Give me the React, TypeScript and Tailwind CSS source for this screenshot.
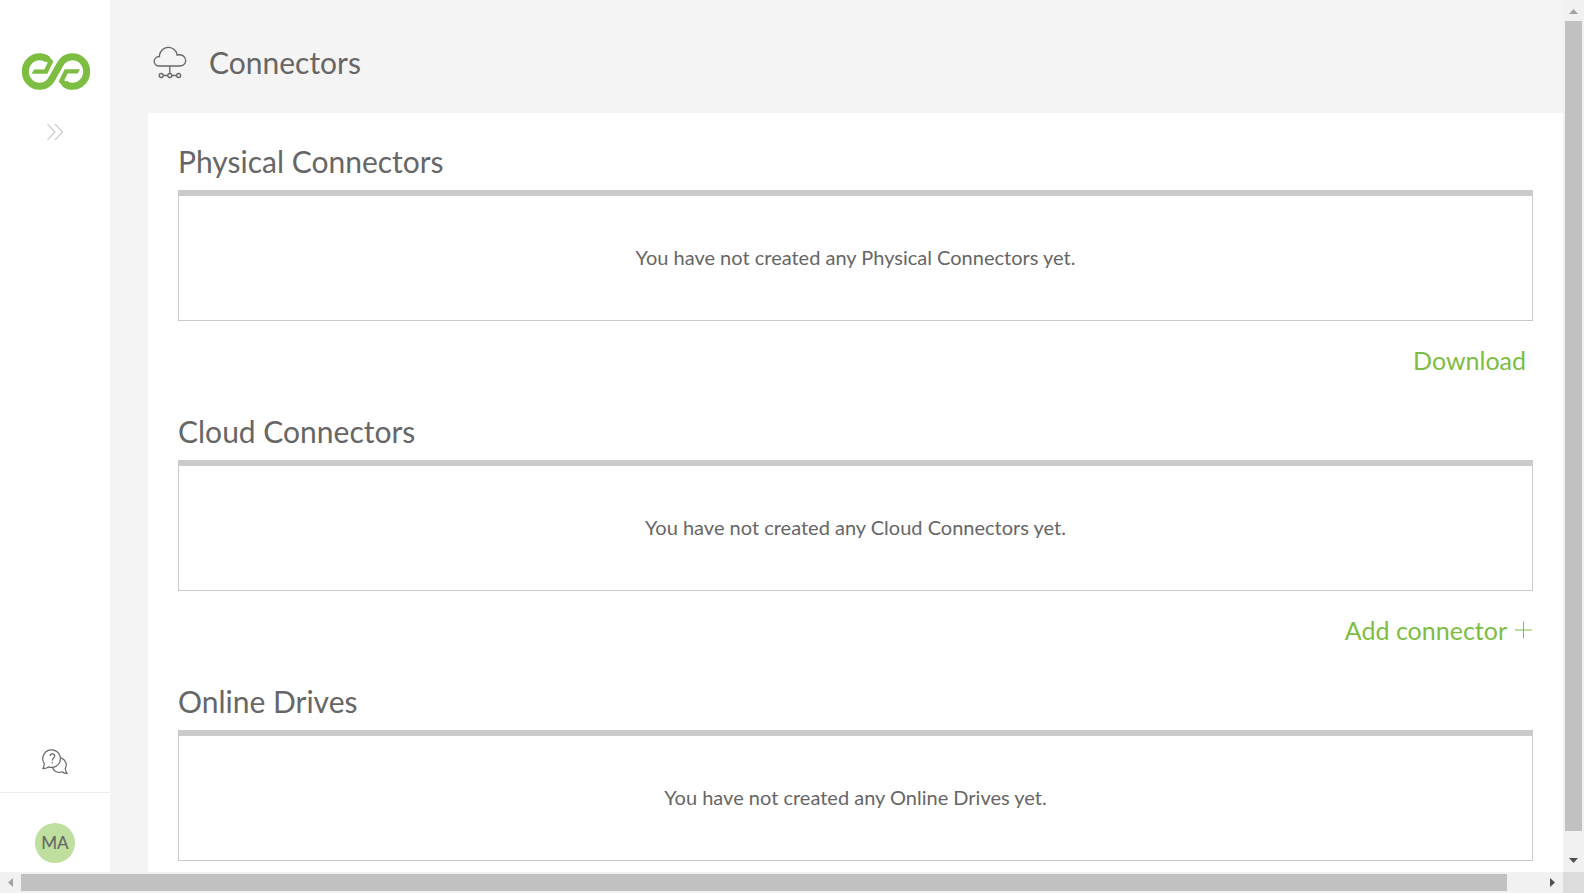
import React from 'react';

function Logo() {
  return (
    <svg viewBox="66 69 204 110" className="h-[37px] w-[68px]" aria-hidden="true">
      <g fill="none" stroke="#7cbd42" strokeWidth="21">
        <path d="M143 88C136 82 128 79.500 119 79.500A43 44.500 0 0 0 119 168.500C149 168.500 156 144 168 124C180 104 187 79.500 217 79.500A43 44.500 0 0 1 217 168.500C208 168.500 200 166 193 160" />
      </g>
      <path fill="#7cbd42" d="M148 80L160 94L142 131H95L102 118H133L143 98L136 92ZM188 168L176 154L194 117H240L233 130H203L193 150L200 156Z" />
    </svg>
  );
}

function CloudIcon() {
  return (
    <svg viewBox="0 0 34 34" className="h-[34px] w-[34px]" fill="none" stroke="#666" strokeWidth="1.3" aria-hidden="true">
      <path d="M6.500 11.500V10A9 9 0 0 1 24 8.800V10C29 9 32.700 11.500 32.700 15.500C32.700 18.800 30 21 27 21H6.500C3.200 21 1.200 19 1.200 16.200C1.200 13.600 3.300 11.500 6.500 11.500ZM16.800 21V28.500M10.400 30.500H14.700M19 30.500H23.300" />
      <circle cx="8.200" cy="30.500" r="2" />
      <circle cx="16.800" cy="30.500" r="2" />
      <circle cx="25.600" cy="30.500" r="2" />
    </svg>
  );
}

function HelpIcon() {
  return (
    <svg viewBox="0 0 26 26" className="h-[26px] w-[26px]" fill="none" stroke="#666" strokeWidth="1.2" strokeLinejoin="round" aria-hidden="true">
      <path d="M.8 19.600C2 18.500 2.300 16.800 2.200 14.400A8.800 8.800 0 1 1 6.600 17.900C4.600 19.200 2.600 19.600.8 19.600Z" />
      <path d="M19.100 8.900C23.800 10.700 25.500 15.700 23.200 19.500C23.500 21.800 24.200 23.400 25.200 24.400C23.100 24.500 21.300 23.800 20 22.700C16 24.500 12 22.500 10.500 18.700" />
      <path d="M8.100 6.900C8.200 5.500 9 4.800 10.400 4.800C11.800 4.800 12.700 5.600 12.700 6.900C12.700 8.600 10.400 8.700 10.400 11.500M10.400 13.200V14.600" />
    </svg>
  );
}

function Sidebar() {
  return (
    <aside className="flex w-[110px] shrink-0 flex-col items-center bg-white pt-[53px] pb-[9px]">
      <a href="#home" aria-label="Home" className="ml-[2px]"><Logo /></a>
      <button type="button" aria-label="Expand menu" className="mt-[34px]">
        <svg viewBox="0 0 16 16" className="h-4 w-4" fill="none" stroke="#c8c8c8" strokeWidth="1.1" aria-hidden="true">
          <path d="M.5 0L8 8L.5 16M8 0L15.500 8L8 16" />
        </svg>
      </button>
      <button type="button" aria-label="Help" className="mt-auto mb-[17px]"><HelpIcon /></button>
      <div className="mb-[30px] h-px w-full bg-[#ececec]" />
      <button type="button" aria-label="Account MA" className="h-10 w-10 rounded-full bg-[#bfdf9f] text-[17px] font-medium text-[#666]">MA</button>
    </aside>
  );
}

type SectionProps = { title: string; children?: React.ReactNode };

function Section({ title, children }: SectionProps) {
  return (
    <section className="flex h-[270px] shrink-0 flex-col">
      <h2 className="mb-[9px] text-[30px] leading-10">{title}</h2>
      <div className="flex h-[131px] items-center justify-center border border-t-[6px] border-[#cbcbcb] pb-[2px]">
        <p className="text-[20px] leading-7">You have not created any {title} yet.</p>
      </div>
      <div className="mt-[19px] flex justify-end text-[25px] leading-10 text-[#7cbd42]">{children}</div>
    </section>
  );
}

const arrow = 'h-[21px] w-[21px] shrink-0';

function Arrow({ label, d, fill }: { label: string; d: string; fill: string }) {
  return (
    <button type="button" aria-label={label} className={arrow}>
      <svg viewBox="0 0 21 21" className="h-full w-full" aria-hidden="true"><path d={d} fill={fill} /></svg>
    </button>
  );
}

export default function App() {
  return (
    <div className="flex h-screen flex-col overflow-hidden bg-white font-[Lato,sans-serif] text-[#666]">
      <div className="flex min-h-0 flex-1">
        <Sidebar />
        <main className="flex min-w-0 flex-1 flex-col overflow-hidden bg-[#f4f4f4] pl-[38px]">
          <header className="flex h-[113px] shrink-0 items-center gap-[22px] pt-[14px] pb-1 pl-[5px]">
            <CloudIcon />
            <h1 className="text-[30px] leading-10">Connectors</h1>
          </header>
          <div className="min-h-0 flex-1 overflow-hidden bg-white px-[30px] pt-7">
            <Section title="Physical Connectors">
              <a href="#download" className="pr-[7px]">Download</a>
            </Section>
            <Section title="Cloud Connectors">
              <button type="button" className="flex items-center gap-2">
                Add connector
                <svg viewBox="0 0 18 18" className="h-[18px] w-[18px]" stroke="#7cbd42" aria-hidden="true"><path d="M0 9H17M8.500 .5V17.500" /></svg>
              </button>
            </Section>
            <Section title="Online Drives" />
          </div>
        </main>
        <div className="flex w-[21px] shrink-0 flex-col bg-[#f1f1f1]">
          <Arrow label="Scroll up" d="M6 14H15L10.500 9Z" fill="#a3a3a3" />
          <div className="mx-[2px] mb-5 flex-1 bg-[#c1c1c1]" />
          <Arrow label="Scroll down" d="M6 7H15L10.500 12Z" fill="#505050" />
        </div>
      </div>
      <div className="flex h-[21px] shrink-0 bg-[#f1f1f1]">
        <Arrow label="Scroll left" d="M13 6V15L8 10.500Z" fill="#a3a3a3" />
        <div className="my-[2px] mr-[35px] flex-1 bg-[#c1c1c1]" />
        <Arrow label="Scroll right" d="M8 6V15L13 10.500Z" fill="#505050" />
        <div className="w-[21px] bg-[#dcdcdc]" />
      </div>
    </div>
  );
}
